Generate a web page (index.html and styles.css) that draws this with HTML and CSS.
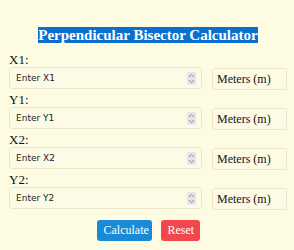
FILE: index.html
```html
<!DOCTYPE html>
<html lang="en">
<head>
  <meta charset="UTF-8" />
  <meta name="viewport" content="width=device-width, initial-scale=1.0" />
  <title>Perpendicular Bisector Calculator</title>
  <link rel="stylesheet" href="styles.css">
</head>
<body>
  <main class="calc">
    <h1><span class="title">Perpendicular Bisector Calculator</span></h1>
    <div class="field">
      <label for="x1">X1:</label>
      <div class="row">
        <div class="num"><input id="x1" type="text" placeholder="Enter X1" /><span class="spin"><svg width="7" height="11" viewBox="0 0 7 11"><path d="M1 4 L3.5 1.5 L6 4 M1 7 L3.5 9.5 L6 7" fill="none" stroke="#8a8a96" stroke-width="1"/></svg></span></div>
        <div class="unit">Meters (m)</div>
      </div>
    </div>
    <div class="field">
      <label for="y1">Y1:</label>
      <div class="row">
        <div class="num"><input id="y1" type="text" placeholder="Enter Y1" /><span class="spin"><svg width="7" height="11" viewBox="0 0 7 11"><path d="M1 4 L3.5 1.5 L6 4 M1 7 L3.5 9.5 L6 7" fill="none" stroke="#8a8a96" stroke-width="1"/></svg></span></div>
        <div class="unit">Meters (m)</div>
      </div>
    </div>
    <div class="field">
      <label for="x2">X2:</label>
      <div class="row">
        <div class="num"><input id="x2" type="text" placeholder="Enter X2" /><span class="spin"><svg width="7" height="11" viewBox="0 0 7 11"><path d="M1 4 L3.5 1.5 L6 4 M1 7 L3.5 9.5 L6 7" fill="none" stroke="#8a8a96" stroke-width="1"/></svg></span></div>
        <div class="unit">Meters (m)</div>
      </div>
    </div>
    <div class="field">
      <label for="y2">Y2:</label>
      <div class="row">
        <div class="num"><input id="y2" type="text" placeholder="Enter Y2" /><span class="spin"><svg width="7" height="11" viewBox="0 0 7 11"><path d="M1 4 L3.5 1.5 L6 4 M1 7 L3.5 9.5 L6 7" fill="none" stroke="#8a8a96" stroke-width="1"/></svg></span></div>
        <div class="unit">Meters (m)</div>
      </div>
    </div>
    <div class="actions">
      <button class="btn btn-calc">Calculate</button>
      <button class="btn btn-reset">Reset</button>
    </div>
  </main>
</body>
</html>
```

FILE: styles.css
```css
body { margin: 0; background: #fdfbe2; font-family: "Liberation Serif", "Times New Roman", serif; color: #111; }
.calc { padding: 27px 7px 0 9px; }
h1 { margin: 0 0 9px; text-align: center; font-size: 15px; line-height: 16px; font-weight: bold; }
.title { background: #0b6fd0; color: #fff; }
.field { margin-bottom: 2px; }
.field label { display: block; font-size: 13px; line-height: 15px; height: 15px; }
.row { display: grid; grid-template-columns: 1fr 75px; gap: 10px; align-items: start; }
.num { display: flex; align-items: center; height: 20px; border: 1px solid #ebe7cb; border-radius: 3px; background: #fdfbe6; padding: 0 5px 0 6px; }
.num input { flex: 1; min-width: 0; border: none; background: transparent; padding: 0; font-family: "DejaVu Sans", Verdana, sans-serif; font-size: 9px; color: #222; }
.num input::placeholder { color: #222; }
.num input:focus { outline: none; }
.spin { display: flex; align-items: center; justify-content: center; width: 9px; height: 13px; background: #e3e3ee; border-radius: 2px; }
.unit { height: 20px; margin-top: 1px; border: 1px solid #ebe7cb; border-radius: 3px; background: #fdfbe6; font-size: 12px; line-height: 20px; padding-left: 4px; }
.actions { display: flex; justify-content: center; gap: 9px; margin-top: 10px; }
.btn { border: none; border-radius: 3px; color: #fff; font-family: "Liberation Serif", "Times New Roman", serif; font-size: 12px; height: 21px; padding: 0 7px; }
.btn-calc { background: #1a8ad6; width: 55px; }
.btn-reset { background: #f2474d; width: 39px; }
```
